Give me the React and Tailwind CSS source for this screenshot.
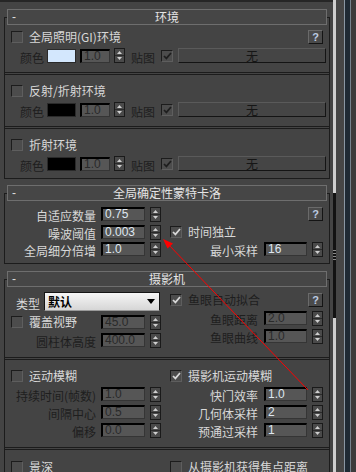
import React from "react";

// 3ds Max style rollout panel (VRay camera / environment settings)

const cjk = "font-['Noto_Sans_CJK_SC','Liberation_Sans',sans-serif]";
const num = "font-['Liberation_Sans','Noto_Sans_CJK_SC',sans-serif]";

function Label({ children, dim, className = "" }) {
  return (
    <span
      className={`text-[12px] leading-[14px] whitespace-nowrap ${
        dim ? "text-[#1e1e1e]" : "text-[#d8d8d8]"
      } ${className}`}
    >
      {children}
    </span>
  );
}

function Check({ on, dim, className = "" }) {
  return (
    <div
      className={`w-[12px] h-[12px] shrink-0 border border-t-[#1c1c1c] border-l-[#1c1c1c] border-r-[#5e5e5e] border-b-[#5e5e5e] bg-[#4c4c4c] flex items-center justify-center ${className}`}
    >
      {on && (
        <svg width="9" height="8" viewBox="0 0 9 8">
          <path
            d="M1 4 L3.4 6.4 L8 1"
            fill="none"
            stroke={dim ? "#1e1e1e" : "#d8d8d8"}
            strokeWidth="1.7"
          />
        </svg>
      )}
    </div>
  );
}

function Spin({ className = "" }) {
  return (
    <div
      className={`w-[11px] h-[15px] shrink-0 border border-[#1a1a1a] bg-[#4a4a4a] ${className}`}
    >
      <svg width="9" height="13" viewBox="0 0 9 13" className="block">
        <path d="M4.5 2 L7 5 L2 5 Z" fill="#cfcfcf" />
        <line x1="0" y1="6.5" x2="9" y2="6.5" stroke="#2a2a2a" />
        <path d="M2 8 L7 8 L4.5 11 Z" fill="#cfcfcf" />
      </svg>
    </div>
  );
}

function Num({ v, dim, className = "" }) {
  return (
    <div
      className={`h-[14px] shrink-0 border-t-2 border-l-2 border-t-black border-l-black border-r border-b border-r-[#353535] border-b-[#353535] bg-[#565656] pl-[2px] text-[12px] leading-[11px] ${num} ${
        dim ? "text-[#2a2a2a]" : "text-[#dfe7f0]"
      } ${className}`}
    >
      {v}
    </div>
  );
}

function Q({ className = "" }) {
  return (
    <div
      className={`w-[15px] h-[14px] shrink-0 border border-t-[#6a6a6a] border-l-[#6a6a6a] border-r-[#141414] border-b-[#141414] bg-[#4a4a4a] flex items-center justify-center text-[11px] leading-[11px] font-bold text-[#bccbe2] ${num} ${className}`}
    >
      ?
    </div>
  );
}

function Divider({ className = "" }) {
  return <div className={`h-[3px] shrink-0 border-t border-b border-[#1c1c1c] ${className}`} />;
}

function CheckRow({ label, on, dim, cdim, className = "" }) {
  return (
    <div className={`flex items-center h-[14px] ${className}`}>
      <Check on={on} dim={cdim} className="ml-[6px]" />
      <Label dim={dim} className="ml-[6px]">
        {label}
      </Label>
    </div>
  );
}

// left column field: label box ends at x 96
function Field({ label, value, dim, vdim, className = "" }) {
  return (
    <div className={`flex items-center h-[14px] ${className}`}>
      <div className="w-[91px] text-right">
        <Label dim={dim}>{label}</Label>
      </div>
      <Num v={value} dim={vdim} className="ml-[5px] w-[44px]" />
      <Spin className="ml-[5px]" />
    </div>
  );
}

// right column field: label box ends at x 258
function RField({ label, value, dim, vdim, className = "" }) {
  return (
    <div className={`flex items-center h-[14px] ${className}`}>
      <div className="w-[97px] text-right">
        <Label dim={dim}>{label}</Label>
      </div>
      <Num v={value} dim={vdim} className="ml-[6px] w-[43px]" />
      <Spin className="ml-[5px]" />
    </div>
  );
}

function ColorRow({ swatch, className = "" }) {
  return (
    <div className={`flex items-center h-[15px] ${className}`}>
      <div className="w-[42px] pl-[15px]">
        <Label dim>颜色</Label>
      </div>
      <div className={`w-[29px] h-[14px] shrink-0 border border-[#2a2a2a] ${swatch}`} />
      <Num v="1.0" dim className="ml-[4px] w-[30px]" />
      <Spin className="ml-[4px]" />
      <div className="ml-[6px] w-[30px]">
        <Label dim>贴图</Label>
      </div>
      <Check on dim />
      <div className="ml-[5px] w-[148px] h-[15px] shrink-0 border border-t-[#5a5a5a] border-l-[#5a5a5a] border-r-[#141414] border-b-[#141414] bg-[#454545] flex items-center justify-center text-[12px] leading-[13px] text-[#161616]">
        无
      </div>
    </div>
  );
}

function Section({ title, className = "", children }) {
  return (
    <div className={`ml-[4px] w-[326px] shrink-0 border border-[#1c1c1c] flex flex-col ${className}`}>
      <div className="-mt-[9px] ml-[2px] w-[320px] h-[16px] shrink-0 border border-[#6e6e6e] bg-[#464646] grid grid-cols-[20px_1fr_20px] items-center">
        <span className={`pl-[4px] text-[12px] leading-[14px] text-[#dcdcdc] ${num}`}>-</span>
        <span className="text-center text-[12px] leading-[14px] text-[#e4e4e4] whitespace-nowrap">
          {title}
        </span>
        <span />
      </div>
      {children}
    </div>
  );
}

function Dropdown() {
  return (
    <div className="w-[116px] h-[19px] shrink-0 border border-[#151515] border-b-[#9a9a9a] bg-linear-to-b from-[#f6f6f6] to-[#d6d6d6] flex items-center pl-[3px]">
      <span className="text-[12px] leading-[14px] font-bold text-black">默认</span>
      <svg width="8" height="5" viewBox="0 0 8 5" className="ml-auto mr-[4px]">
        <path d="M0 0 L8 0 L4 5 Z" fill="#000" />
      </svg>
    </div>
  );
}

export default function App() {
  return (
    <div className={`w-[356px] h-[472px] overflow-hidden bg-[#444444] flex relative ${cjk}`}>
      <div className="w-[333px] shrink-0 flex flex-col border-t-2 border-[#262626]">
        {/* 环境 */}
        <Section title="环境" className="mt-[15px]">
          <div className="mt-[5px] flex items-center h-[14px]">
            <Check className="ml-[6px]" />
            <Label className="ml-[6px]">全局照明(GI)环境</Label>
            <Q className="ml-auto mr-[6px]" />
          </div>
          <ColorRow swatch="bg-[#d3e7fd]" className="mt-[4px]" />
          <Divider className="mt-[9px]" />
          <CheckRow label="反射/折射环境" className="mt-[9px]" />
          <ColorRow swatch="bg-black" className="mt-[4px]" />
          <Divider className="mt-[9px]" />
          <CheckRow label="折射环境" className="mt-[9px]" />
          <ColorRow swatch="bg-black" className="mt-[4px]" />
          <div className="h-[7px]" />
        </Section>

        {/* 全局确定性蒙特卡洛 */}
        <Section title="全局确定性蒙特卡洛" className="mt-[14px]">
          <div className="mt-[6px] flex items-center">
            <Field label="自适应数量" value="0.75" />
            <Q className="ml-auto mr-[6px]" />
          </div>
          <div className="mt-[4px] flex items-center">
            <Field label="噪波阈值" value="0.003" />
            <Check on className="ml-[9px]" />
            <Label className="ml-[6px]">时间独立</Label>
          </div>
          <div className="mt-[3px] flex items-center">
            <Field label="全局细分倍增" value="1.0" />
            <RField label="最小采样" value="16" />
          </div>
          <div className="h-[7px]" />
        </Section>

        {/* 摄影机 */}
        <Section title="摄影机" className="mt-[15px]">
          <div className="flex items-start">
            <div className="w-[156px] shrink-0 flex flex-col">
              <div className="mt-[5px] h-[19px] flex items-center">
                <div className="w-[39px] pl-[11px]">
                  <Label>类型</Label>
                </div>
                <Dropdown />
              </div>
              <div className="mt-[4px] flex items-center h-[14px]">
                <div className="w-[91px] flex items-center">
                  <Check className="ml-[6px]" />
                  <Label className="ml-[6px]">覆盖视野</Label>
                </div>
                <Num v="45.0" dim className="ml-[5px] w-[44px]" />
                <Spin className="ml-[5px]" />
              </div>
              <Field label="圆柱体高度" value="400.0" dim vdim className="mt-[4px]" />
            </div>
            <div className="flex-1 flex flex-col">
              <div className="mt-[6px] h-[14px] flex items-center">
                <Check on className="ml-[9px]" />
                <Label dim className="ml-[6px]">
                  鱼眼自动拟合
                </Label>
                <Q className="ml-auto mr-[6px]" />
              </div>
              <RField label="鱼眼距离" value="2.0" dim vdim className="mt-[4px]" />
              <RField label="鱼眼曲线" value="1.0" dim vdim className="mt-[4px]" />
            </div>
          </div>
          <Divider className="mt-[10px]" />
          <div className="mt-[9px] flex items-center">
            <div className="w-[156px] shrink-0">
              <CheckRow label="运动模糊" />
            </div>
            <Check on className="ml-[9px]" />
            <Label className="ml-[6px]">摄影机运动模糊</Label>
          </div>
          <div className="mt-[4px] flex items-center">
            <Field label="持续时间(帧数)" value="1.0" dim vdim />
            <RField label="快门效率" value="1.0" />
          </div>
          <div className="mt-[4px] flex items-center">
            <Field label="间隔中心" value="0.5" dim vdim />
            <RField label="几何体采样" value="2" />
          </div>
          <div className="mt-[4px] flex items-center">
            <Field label="偏移" value="0.0" dim vdim />
            <RField label="预通过采样" value="1" />
          </div>
          <Divider className="mt-[10px]" />
          <div className="mt-[10px] flex items-center">
            <div className="w-[156px] shrink-0">
              <CheckRow label="景深" />
            </div>
            <Check className="ml-[9px]" />
            <Label className="ml-[6px]">从摄影机获得焦点距离</Label>
          </div>
          <div className="h-[20px]" />
        </Section>
      </div>

      {/* scrollbar */}
      <div className="w-[3px] shrink-0 flex flex-col">
        <div className="h-[193px] bg-[#cfcfcf]" />
        <div className="h-[125px] bg-[#121212] flex flex-col items-center pt-[57px] gap-[2px]">
          <div className="w-[3px] h-[1px] bg-[#8a8a8a]" />
          <div className="w-[3px] h-[1px] bg-[#8a8a8a]" />
          <div className="w-[3px] h-[1px] bg-[#8a8a8a]" />
          <div className="w-[3px] h-[1px] bg-[#8a8a8a]" />
        </div>
        <div className="flex-1 bg-[#cfcfcf]" />
      </div>
      <div className="w-[8px] shrink-0 bg-[#464646]" />
      <div className="w-[1px] shrink-0 bg-[#8a97a3]" />
      <div className="w-[5px] shrink-0 bg-[#1f2a34]" />
      <div className="w-[1px] shrink-0 bg-[#76848f]" />
      <div className="flex-1 bg-[#3c3c3c]" />

      {/* red annotation arrow */}
      <svg
        className="absolute left-0 top-0 pointer-events-none"
        width="356"
        height="472"
        viewBox="0 0 356 472"
      >
        <line x1="167" y1="243" x2="308" y2="390" stroke="#ff0000" strokeWidth="1" />
        <polygon points="163,239 173,243.5 167.5,248.5" fill="#ff0000" />
      </svg>
    </div>
  );
}
